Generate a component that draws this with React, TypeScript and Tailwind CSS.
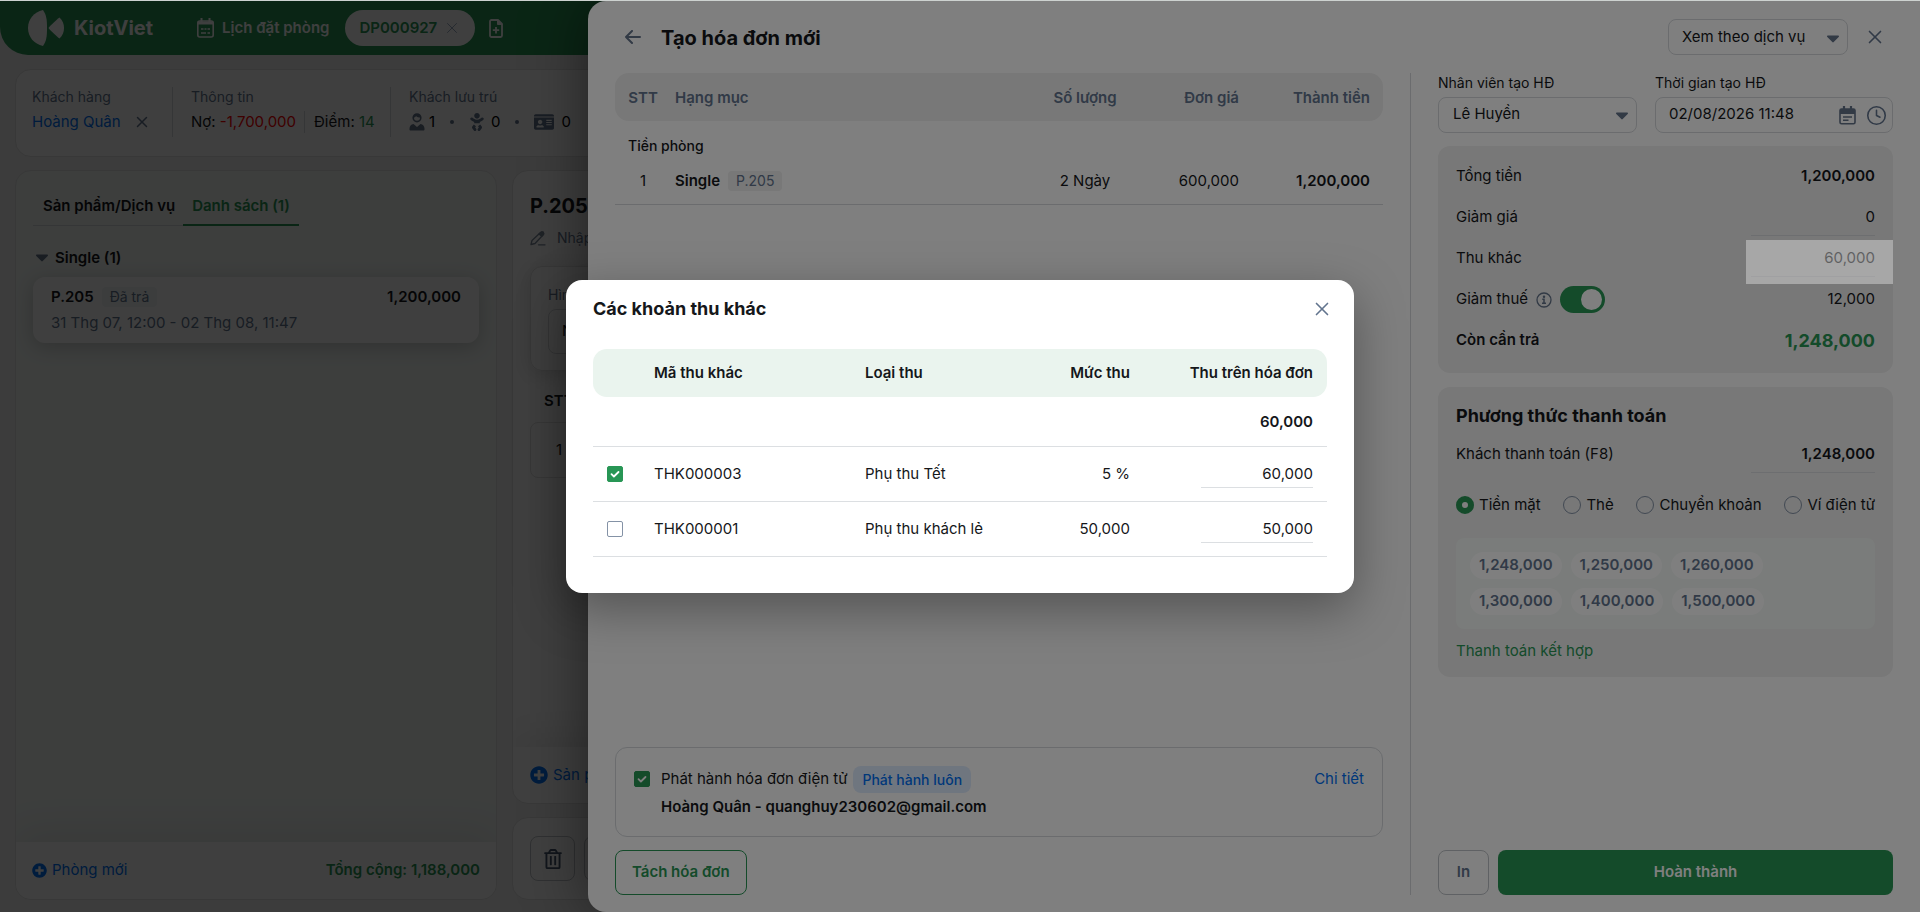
import type { ReactNode } from "react"
import clsx from "clsx"
import { Clock, X } from "lucide-react"
import { FaBaby, FaIdCard, FaPlusCircle, FaRegTrashAlt } from "react-icons/fa"

const fees = [
  {
    code: "THK000003",
    type: "Phụ thu Tết",
    rate: "5 %",
    amount: "60,000",
    checked: true,
  },
  {
    code: "THK000001",
    type: "Phụ thu khách lẻ",
    rate: "50,000",
    amount: "50,000",
    checked: false,
  },
]

const methods = ["Tiền mặt", "Thẻ", "Chuyển khoản", "Ví điện tử"]

const quickAmounts = [
  ["1,248,000", "1,250,000", "1,260,000"],
  ["1,300,000", "1,400,000", "1,500,000"],
]

function Logo() {
  return (
    <svg width="36" height="36" viewBox="0 0 36 36" fill="#fff">
      <path d="M15 0C18.5 5 19 10 19 18s-.5 13-4 18C6 34 0 27 0 18S6 2 15 0Z" />
      <path d="M31.500 7.500C34.500 10 36 14 36 18s-1.500 8-4.500 10.500C28 26 22 20 20.500 18 22 16 28 10 31.500 7.500Z" />
    </svg>
  )
}

function Caret({ className }: Readonly<{ className?: string }>) {
  return (
    <svg
      className={clsx("pointer-events-none shrink-0", className)}
      width="12"
      height="8"
      viewBox="0 0 12 8"
      fill="#64748b"
    >
      <path d="M1 .5h10c.9 0 1.300 1 .7 1.600l-5 5c-.4.4-1 .4-1.400 0l-5-5C-.3 1.500.1.5 1 .5Z" />
    </svg>
  )
}

function GridCalendar() {
  return (
    <svg
      width="17"
      height="20"
      viewBox="0 0 17 20"
      fill="none"
      stroke="#fff"
      strokeWidth="1.600"
    >
      <rect x=".8" y="3" width="15.400" height="16" rx="2" />
      <path d="M.8 5h15.400" strokeWidth="3" />
      <path d="M4.500 0v4M12.500 0v4" strokeWidth="2" />
      <path d="M4 11h2.500M7.500 11h2M10.500 11h2.500M4 15h5M10.500 15h2.500" />
    </svg>
  )
}

function LineCalendar() {
  return (
    <svg
      width="17"
      height="19"
      viewBox="0 0 17 19"
      fill="none"
      stroke="#64748b"
      strokeWidth="1.600"
    >
      <rect x="1" y="3" width="15" height="14.800" rx="1.500" />
      <path d="M1 5.500h15" strokeWidth="5" />
      <path d="M5 0v4M12 0v4" strokeWidth="2.200" />
      <path d="M4 11h9M4 14.300h5.500" />
    </svg>
  )
}

function NewFile() {
  return (
    <svg
      width="14"
      height="19"
      viewBox="0 0 14 19"
      fill="none"
      stroke="#fff"
      strokeWidth="1.800"
      strokeLinejoin="round"
    >
      <path d="M1 2.500C1 1.700 1.700 1 2.500 1H9l4 4v11.500c0 .8-.7 1.500-1.500 1.500h-9C1.700 18 1 17.300 1 16.500Z" />
      <path d="M8.500 1v4.500H13Z" fill="#fff" strokeWidth="1" />
      <path d="M7 8v6.500M3.800 11.200h6.400" />
    </svg>
  )
}

function Guest() {
  return (
    <svg width="16" height="18" viewBox="0 0 16 18" fill="#64748b">
      <circle
        cx="8"
        cy="4.800"
        r="3.800"
        fill="none"
        stroke="#64748b"
        strokeWidth="1.600"
      />
      <path d="M4.200 4.800C4.500 2 6 1 8 1s3.500 1 3.800 3.500C9.500 4.500 8 4 7 3 6.500 4 5.500 4.600 4.200 4.800Z" />
      <path d="M4.500 11 8 14l3.500-3c2.500.5 4 2.300 4 4.500v1c0 .6-.4 1-1 1h-13c-.6 0-1-.4-1-1v-1c0-2.200 1.500-4 4-4.500Z" />
    </svg>
  )
}

function Pencil() {
  return (
    <svg
      width="16"
      height="15"
      viewBox="0 0 16 15"
      fill="none"
      stroke="#7b8899"
      strokeWidth="1.300"
      strokeLinejoin="round"
      strokeLinecap="round"
    >
      <path d="M1 13.500 2 9.500 10.500 1.500c.8-.7 1.800-.7 2.500 0s.7 1.800 0 2.500L5 12.500Z" />
      <path d="m9 3 2.700-2h1.500l.5 2-2 2.300Z" fill="#7b8899" />
      <path d="M8.500 13.800H15" />
    </svg>
  )
}

function BackArrow() {
  return (
    <svg
      width="16"
      height="14"
      viewBox="0 0 16 14"
      fill="none"
      stroke="#64748b"
      strokeWidth="2"
      strokeLinecap="round"
      strokeLinejoin="round"
    >
      <path d="M7 1 1 7l6 6M1 7h14" />
    </svg>
  )
}

function InfoIcon() {
  return (
    <svg
      width="16"
      height="16"
      viewBox="0 0 16 16"
      fill="none"
      stroke="#64748b"
      strokeWidth="1.300"
    >
      <circle cx="8" cy="8" r="7" />
      <path d="M6.300 7.300H8v4M6 11.300h4" strokeWidth="1.500" />
      <circle cx="8" cy="4.800" r=".6" fill="#64748b" />
    </svg>
  )
}

function Checkbox({
  label,
  checked,
  id,
}: Readonly<{ label: string; checked: boolean; id?: string }>) {
  return (
    <span className="relative inline-block size-4 shrink-0 align-middle">
      <input
        type="checkbox"
        id={id}
        aria-label={label}
        defaultChecked={checked}
        className="peer block size-4 appearance-none rounded-xs border border-[#8492a6] bg-white checked:border-[#289655] checked:bg-[#289655]"
      />
      <svg
        className="pointer-events-none absolute inset-0 hidden peer-checked:block"
        viewBox="0 0 16 16"
        fill="none"
        stroke="#fff"
        strokeWidth="1.800"
        strokeLinecap="round"
        strokeLinejoin="round"
      >
        <path d="m4.500 8.200 2.400 2.300 4.600-4.500" />
      </svg>
    </span>
  )
}

function SummaryRow({
  label,
  children,
}: Readonly<{ label: ReactNode; children: ReactNode }>) {
  return (
    <div className="flex h-[41px] items-center justify-between">
      <div className="flex items-center">{label}</div>
      {children}
    </div>
  )
}

function TopBar() {
  return (
    <header className="flex h-[54px] shrink-0 items-center rounded-bl-[28px] bg-[#289655] pl-7 text-white">
      <Logo />
      <span className="ml-[10px] text-xl font-bold">KiotViet</span>
      <button type="button" className="ml-11 flex items-center gap-2 font-semibold">
        <GridCalendar />
        Lịch đặt phòng
      </button>
      <div className="ml-4 flex h-9 items-center rounded-full bg-white pr-[14px] pl-[14px] font-semibold text-[#289655]">
        DP000927
        <button type="button" aria-label="Đóng DP000927" className="ml-[6px]">
          <X size={18} strokeWidth={1.2} className="text-slate-400" />
        </button>
      </div>
      <button type="button" aria-label="Thêm đặt phòng" className="ml-[14px]">
        <NewFile />
      </button>
    </header>
  )
}

function CustomerBar() {
  return (
    <section className="flex h-[88px] shrink-0 items-start rounded-2xl border border-[#e2e2e2] bg-white pt-[17px] pl-4">
      <div className="h-[50px] w-[141px] border-r border-[#d6d9dd]">
        <div className="text-sm leading-5 text-slate-500">Khách hàng</div>
        <div className="mt-[5px] flex h-5 items-center gap-3">
          <a href="#khach-hang" className="text-[#0070f4]">
            Hoàng Quân
          </a>
          <button type="button" aria-label="Bỏ khách hàng">
            <X size={18} strokeWidth={2} className="text-slate-500" />
          </button>
        </div>
      </div>
      <div className="h-[50px] w-[218px] border-r border-[#d6d9dd] pl-[18px]">
        <div className="text-sm leading-5 text-slate-500">Thông tin</div>
        <div className="mt-[5px] flex h-5 items-center">
          <span>
            Nợ: <span className="text-[#f00]">-1,700,000</span>
          </span>
          <span className="ml-2 border-l border-[#d6d9dd] pl-[9px]">
            Điểm: <span className="text-[#289655]">14</span>
          </span>
        </div>
      </div>
      <div className="h-[50px] w-[198px] border-r border-[#d6d9dd] pl-[18px]">
        <div className="text-sm leading-5 text-slate-500">Khách lưu trú</div>
        <div className="mt-[5px] flex h-5 items-center justify-between pr-[17px] text-slate-500">
          <span className="flex items-center gap-1">
            <Guest />
            <span className="text-black">1</span>
          </span>
          <span className="size-1 rounded-full bg-slate-500" />
          <span className="flex items-center gap-[5px]">
            <FaBaby size={18} />
            <span className="text-black">0</span>
          </span>
          <span className="size-1 rounded-full bg-slate-500" />
          <span className="flex items-center gap-2">
            <FaIdCard size={20} />
            <span className="text-black">0</span>
          </span>
        </div>
      </div>
    </section>
  )
}

function RoomList() {
  return (
    <section className="flex w-[482px] shrink-0 flex-col overflow-hidden rounded-2xl border border-[#e2e2e2] bg-[#f4f9f6]">
      <div className="flex-1 px-[17px] pt-[17px]">
        <div className="inline-flex h-[38px] border-b border-[#d6d9dd] font-semibold">
          <button type="button" className="pr-2 pl-[10px]">
            Sản phẩm/Dịch vụ
          </button>
          <button
            type="button"
            className="-mb-px border-b-2 border-[#289655] px-[9px] text-[#289655]"
          >
            Danh sách (1)
          </button>
        </div>
        <button
          type="button"
          className="mt-5 flex items-center gap-[7px] pl-[3px] leading-6 font-semibold"
        >
          <Caret />
          Single (1)
        </button>
        <article className="mt-[7px] rounded-xl bg-white px-[18px] py-[9px] shadow-[0_4px_20px_rgba(0,0,0,0.2)]">
          <div className="flex h-[22px] items-center justify-between font-semibold">
            <span className="flex items-center gap-2">
              P.205
              <span className="rounded-sm bg-gray-100 px-2 text-sm leading-5 font-normal text-slate-500">
                Đã trả
              </span>
            </span>
            <span>1,200,000</span>
          </div>
          <div className="mt-1 leading-[22px] text-slate-500">
            31 Thg 07, 12:00 - 02 Thg 08, 11:47
          </div>
        </article>
      </div>
      <footer className="flex h-[57px] items-center justify-between bg-white px-4 shadow-[0_-10px_40px_rgba(0,0,0,0.08)]">
        <button type="button" className="flex items-center gap-[5px] text-[#0070f4]">
          <FaPlusCircle size={15} />
          Phòng mới
        </button>
        <span className="font-semibold text-[#289655]">Tổng cộng: 1,188,000</span>
      </footer>
    </section>
  )
}

function RoomDetail() {
  return (
    <div className="flex flex-1 flex-col gap-[13px]">
      <section className="flex flex-1 flex-col overflow-hidden rounded-2xl border border-[#e2e2e2] bg-white">
        <div className="flex-1 px-[17px] pt-[21px]">
          <h2 className="text-xl leading-7 font-bold">P.205</h2>
          <div className="mt-[6px] flex h-6 items-center gap-[11px] text-sm text-slate-500">
            <Pencil />
            Nhập
          </div>
          <div className="mt-4 h-[105px] rounded-xl border border-[#e2e2e2] px-[17px] pt-[18px] shadow-[0_4px_20px_rgba(0,0,0,0.15)]">
            <label htmlFor="rent-type" className="block text-sm leading-5 text-slate-500">
              Hình thức
            </label>
            <select
              id="rent-type"
              className="mt-1 h-[45px] w-40 appearance-none rounded-lg border border-[#d6d9dd] pl-[13px]"
            >
              <option>Ngày</option>
            </select>
          </div>
          <div className="mt-[18px] pl-[14px] leading-6 font-semibold">STT</div>
          <div className="mt-[9px] flex h-14 items-center rounded-lg border border-[#e2e2e2] pl-[25px]">
            1
          </div>
        </div>
        <footer className="flex h-14 items-center px-[17px] shadow-[0_-10px_40px_rgba(0,0,0,0.08)]">
          <button type="button" className="flex items-center gap-[5px] text-[#0070f4]">
            <FaPlusCircle size={18} />
            Sản phẩm
          </button>
        </footer>
      </section>
      <section className="flex h-[83px] items-center gap-[9px] rounded-2xl border border-[#e2e2e2] bg-white px-[17px]">
        <button
          type="button"
          aria-label="Xóa"
          className="flex size-[45px] items-center justify-center rounded-lg border border-[#bfc3c8] text-slate-600"
        >
          <FaRegTrashAlt size={20} />
        </button>
        <button
          type="button"
          aria-label="Thêm"
          className="size-[45px] rounded-lg border border-[#bfc3c8]"
        />
      </section>
    </div>
  )
}

function InvoiceLines() {
  return (
    <div className="flex flex-1 flex-col">
      <table className="w-full table-fixed">
        <thead>
          <tr className="h-12 text-slate-500">
            <th className="w-14 rounded-l-[14px] bg-[#f0f0f0] pt-[2px] font-semibold">STT</th>
            <th className="bg-[#f0f0f0] pt-[2px] pl-1 text-left font-semibold">Hạng mục</th>
            <th className="w-[100px] bg-[#f0f0f0] pt-[2px] font-semibold">Số lượng</th>
            <th className="w-[109px] bg-[#f0f0f0] pt-[2px] pr-[5px] text-right font-semibold">
              Đơn giá
            </th>
            <th className="w-[139px] rounded-r-[14px] bg-[#f0f0f0] pt-[2px] pr-[13px] text-right font-semibold">
              Thành tiền
            </th>
          </tr>
        </thead>
        <tbody>
          <tr className="h-[37px]">
            <td colSpan={5} className="pt-3 pl-[13px] text-sm font-medium">
              Tiền phòng
            </td>
          </tr>
          <tr className="h-[46px] border-b border-[#d6d9dd]">
            <td className="text-center">1</td>
            <td className="pl-1 font-semibold">
              <span className="flex items-center gap-2">
                Single
                <span className="rounded-sm bg-[#f0f0f0] px-2 text-sm leading-5 font-normal text-slate-500">
                  P.205
                </span>
              </span>
            </td>
            <td className="text-center">2 Ngày</td>
            <td className="pr-[5px] text-right">600,000</td>
            <td className="pr-[13px] text-right font-semibold">1,200,000</td>
          </tr>
        </tbody>
      </table>

      <div className="mt-auto flex h-[90px] rounded-xl border border-[#d6d9dd] px-[18px] pt-[18px]">
        <span className="mt-[5px] flex">
          <Checkbox id="e-invoice" label="Phát hành hóa đơn điện tử" checked />
        </span>
        <div className="ml-[11px] flex-1">
          <div className="flex h-[27px] items-center">
            <label htmlFor="e-invoice">Phát hành hóa đơn điện tử</label>
            <span className="ml-[6px] rounded-lg bg-[#dfecff] px-[9px] text-sm leading-[27px] font-medium text-[#0070f4]">
              Phát hành luôn
            </span>
            <a href="#chi-tiet" className="ml-auto text-[#0070f4]">
              Chi tiết
            </a>
          </div>
          <div className="mt-1 leading-5 font-semibold">
            Hoàng Quân - quanghuy230602@gmail.com
          </div>
        </div>
      </div>
      <button
        type="button"
        className="mt-[13px] h-[45px] self-start rounded-lg border border-[#289655] px-4 font-semibold text-[#289655]"
      >
        Tách hóa đơn
      </button>
    </div>
  )
}

function PaymentPanel() {
  return (
    <div className="flex w-[483px] shrink-0 flex-col border-l border-[#d6d9dd] pl-[27px]">
      <div className="flex gap-[18px]">
        <div className="w-[199px] shrink-0">
          <label htmlFor="staff" className="mb-1 block text-sm leading-5">
            Nhân viên tạo HĐ
          </label>
          <div className="relative">
            <select
              id="staff"
              className="h-9 w-full appearance-none rounded-lg border border-[#d6d9dd] pb-[2px] pl-[14px]"
            >
              <option>Lê Huyền</option>
            </select>
            <Caret className="absolute top-[15px] right-[9px]" />
          </div>
        </div>
        <div className="min-w-0 flex-1">
          <label htmlFor="created-at" className="mb-1 block text-sm leading-5">
            Thời gian tạo HĐ
          </label>
          <div className="flex h-9 items-center rounded-lg border border-[#d6d9dd] pr-[5px] pl-[13px]">
            <input
              id="created-at"
              defaultValue="02/08/2026 11:48"
              className="min-w-0 flex-1 pb-[2px] outline-none"
            />
            <button type="button" aria-label="Chọn ngày">
              <LineCalendar />
            </button>
            <button type="button" aria-label="Chọn giờ" className="ml-[10px]">
              <Clock size={21} strokeWidth={1.8} className="text-slate-500" />
            </button>
          </div>
        </div>
      </div>

      <section className="mt-[13px] rounded-xl bg-[#f0f0f0] px-[18px] pt-[10px] pb-3">
        <SummaryRow label="Tổng tiền">
          <span className="font-semibold">1,200,000</span>
        </SummaryRow>
        <SummaryRow label={<label htmlFor="discount">Giảm giá</label>}>
          <input
            id="discount"
            defaultValue="0"
            className="h-9 w-[124px] border-b border-[#dadde0] pb-px text-right"
          />
        </SummaryRow>
        <SummaryRow label="Thu khác">
          <button
            type="button"
            className="h-9 w-[124px] border-b border-[#dadde0] text-right"
          >
            60,000
          </button>
        </SummaryRow>
        <SummaryRow
          label={
            <>
              <label htmlFor="tax-cut">Giảm thuế</label>
              <span className="mr-2 ml-2">
                <InfoIcon />
              </span>
              <span className="relative inline-flex">
                <input
                  id="tax-cut"
                  type="checkbox"
                  role="switch"
                  defaultChecked
                  className="peer h-[27px] w-[45px] appearance-none rounded-full bg-gray-400 checked:bg-[#289655]"
                />
                <span className="pointer-events-none absolute top-[3px] left-[3px] size-[21px] rounded-full bg-white peer-checked:left-[21px]" />
              </span>
            </>
          }
        >
          <span>12,000</span>
        </SummaryRow>
        <SummaryRow label={<span className="font-semibold">Còn cần trả</span>}>
          <span className="text-lg font-bold text-[#289655]">1,248,000</span>
        </SummaryRow>
      </section>

      <section className="mt-[14px] rounded-xl bg-[#f0f0f0] px-[18px] pt-[15px] pb-4">
        <h2 className="text-lg leading-[27px] font-bold">Phương thức thanh toán</h2>
        <div className="mt-[5px]">
          <SummaryRow label={<label htmlFor="paid">Khách thanh toán (F8)</label>}>
            <input
              id="paid"
              defaultValue="1,248,000"
              className="h-9 w-[124px] border-b border-[#dadde0] pb-px text-right font-semibold"
            />
          </SummaryRow>
        </div>
        <div className="mt-5 flex h-5 items-center justify-between">
          {methods.map((method, i) => (
            <label key={method} className="flex items-center gap-[5px] whitespace-nowrap">
              <input
                type="radio"
                name="method"
                defaultChecked={i === 0}
                className="size-[18px] appearance-none rounded-full border border-[#8492a6] checked:border-[6px] checked:border-[#289655] checked:bg-white"
              />
              {method}
            </label>
          ))}
        </div>
        <div className="mt-[23px] flex flex-col gap-[9px] rounded-lg bg-[#f4f9f6] px-[14px] py-[14px]">
          {quickAmounts.map((row) => (
            <div key={row[0]} className="flex gap-[9px]">
              {row.map((amount) => (
                <button
                  type="button"
                  key={amount}
                  className="h-[27px] rounded-full bg-white px-[9px] font-semibold text-slate-500"
                >
                  {amount}
                </button>
              ))}
            </div>
          ))}
        </div>
        <a href="#ket-hop" className="mt-3 block leading-5 text-[#289655]">
          Thanh toán kết hợp
        </a>
      </section>

      <div className="mt-auto flex gap-[9px]">
        <button
          type="button"
          className="h-[45px] w-[51px] rounded-lg border border-[#bfc3c8] font-semibold text-slate-500"
        >
          In
        </button>
        <button
          type="button"
          className="h-[45px] flex-1 rounded-lg bg-[#289655] font-semibold text-white"
        >
          Hoàn thành
        </button>
      </div>
    </div>
  )
}

function InvoiceDrawer() {
  return (
    <aside className="absolute inset-y-0 right-0 left-[588px] flex flex-col rounded-l-[18px] bg-white px-[27px] pb-[17px] shadow-[0_0_60px_rgba(0,0,0,0.5)]">
      <div className="flex h-[72px] shrink-0 items-center pl-[10px]">
        <button type="button" aria-label="Quay lại">
          <BackArrow />
        </button>
        <h1 className="ml-5 pt-px text-xl font-bold">Tạo hóa đơn mới</h1>
        <div className="relative ml-auto">
          <select
            aria-label="Kiểu xem"
            className="block h-9 w-[180px] appearance-none rounded-lg border border-[#d6d9dd] pl-[13px]"
          >
            <option>Xem theo dịch vụ</option>
          </select>
          <Caret className="absolute top-4 right-[9px]" />
        </div>
        <button type="button" aria-label="Đóng" className="mr-[7px] ml-4">
          <X size={22} strokeWidth={1.8} className="text-slate-500" />
        </button>
      </div>
      <div className="flex flex-1 gap-[27px]">
        <InvoiceLines />
        <PaymentPanel />
      </div>
    </aside>
  )
}

function FeesModal() {
  return (
    <div
      role="dialog"
      aria-labelledby="fees-title"
      className="w-[788px] rounded-2xl bg-white px-[27px] pb-9 shadow-[0_16px_50px_rgba(0,0,0,0.35)]"
    >
      <div className="mb-[11px] flex h-[58px] items-center justify-between">
        <h2 id="fees-title" className="text-lg font-bold">
          Các khoản thu khác
        </h2>
        <button type="button" aria-label="Đóng" className="-mr-[6px]">
          <X size={22} strokeWidth={1.8} className="text-slate-500" />
        </button>
      </div>
      <table className="w-full table-fixed">
        <thead>
          <tr className="h-12 font-semibold">
            <td className="w-11 rounded-l-[14px] bg-[#eaf4ee]" />
            <th className="w-[218px] bg-[#eaf4ee] pl-[17px] text-left font-semibold">
              Mã thu khác
            </th>
            <th className="bg-[#eaf4ee] pl-[10px] text-left font-semibold">Loại thu</th>
            <th className="w-[129px] bg-[#eaf4ee] pr-[9px] text-right font-semibold">
              Mức thu
            </th>
            <th className="w-[188px] rounded-r-[14px] bg-[#eaf4ee] pr-[14px] text-right font-semibold">
              Thu trên hóa đơn
            </th>
          </tr>
        </thead>
        <tbody>
          <tr className="h-[49px] border-b border-[#dcdfe2]">
            <td colSpan={5} className="pt-[2px] pr-[14px] text-right font-semibold">
              60,000
            </td>
          </tr>
          {fees.map((fee) => (
            <tr key={fee.code} className="h-[55px] border-b border-[#dcdfe2]">
              <td className="text-center">
                <Checkbox label={fee.code} checked={fee.checked} />
              </td>
              <td className="pl-[17px]">{fee.code}</td>
              <td className="pl-[10px]">{fee.type}</td>
              <td className="pr-[9px] text-right">{fee.rate}</td>
              <td className="pr-[14px] text-right">
                <input
                  aria-label={`Thu trên hóa đơn ${fee.code}`}
                  defaultValue={fee.amount}
                  className="h-7 w-28 border-b border-[#dcdfe2] text-right"
                />
              </td>
            </tr>
          ))}
        </tbody>
      </table>
    </div>
  )
}

export default function App() {
  return (
    <div className="h-screen min-h-[800px] border-t border-[#cdd2d0] font-['Inter','Noto_Sans',sans-serif] text-[15px] text-[#15171a]">
      <div className="relative flex h-full flex-col overflow-hidden bg-[#f0f0f0]">
        <TopBar />
        <main className="flex flex-1 flex-col gap-[13px] px-[15px] pt-[14px] pb-3">
          <CustomerBar />
          <div className="flex flex-1 gap-[15px]">
            <RoomList />
            <RoomDetail />
          </div>
        </main>
        <div className="absolute inset-0 bg-black/50" />
        <InvoiceDrawer />
        <div className="absolute inset-0 bg-black/50" />
        <div className="absolute top-[239px] right-[27px] h-11 w-[147px] bg-white/35" />
        <div className="absolute inset-0 flex items-center justify-center pb-10">
          <FeesModal />
        </div>
      </div>
    </div>
  )
}
